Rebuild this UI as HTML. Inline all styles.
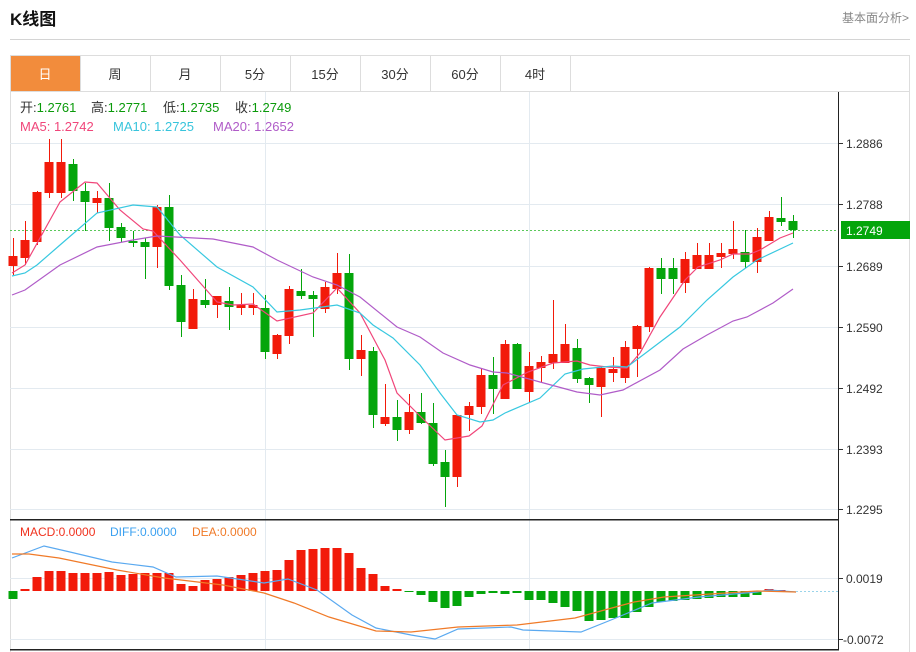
<!DOCTYPE html>
<html><head><meta charset="utf-8"><style>
body{margin:0;width:916px;height:652px;background:#fff;overflow:hidden;font-family:"Liberation Sans","Noto Sans CJK SC",sans-serif;}
</style></head><body>
<svg width="916" height="652" xmlns="http://www.w3.org/2000/svg" style="position:absolute;left:0;top:0;font-family:'Liberation Sans','Noto Sans CJK SC',sans-serif">
<text x="10" y="25" font-size="17" font-weight="bold" fill="#111">K线图</text>
<text x="909" y="22" font-size="12" fill="#888" text-anchor="end">基本面分析&gt;</text>
<rect x="10" y="39" width="900" height="1" fill="#d4d4d4"/>
<rect x="10.5" y="55.5" width="899" height="600" fill="none" stroke="#ddd"/>
<rect x="11" y="56" width="69" height="35" fill="#f28c3c"/>
<rect x="10" y="91" width="900" height="1" fill="#ddd"/>
<g fill="#ddd"><rect x="80" y="56" width="1" height="35"/><rect x="150" y="56" width="1" height="35"/><rect x="220" y="56" width="1" height="35"/><rect x="290" y="56" width="1" height="35"/><rect x="360" y="56" width="1" height="35"/><rect x="430" y="56" width="1" height="35"/><rect x="500" y="56" width="1" height="35"/><rect x="570" y="56" width="1" height="35"/></g>
<g font-size="13" text-anchor="middle" fill="#333"><text x="45" y="79" fill="#fff">日</text><text x="115" y="79">周</text><text x="185" y="79">月</text><text x="255" y="79">5分</text><text x="325" y="79">15分</text><text x="395" y="79">30分</text><text x="465" y="79">60分</text><text x="535" y="79">4时</text></g>
<!-- grid -->
<g fill="#e3eaf0"><rect x="10" y="143" width="829" height="1"/><rect x="10" y="204" width="829" height="1"/><rect x="10" y="266" width="829" height="1"/><rect x="10" y="327" width="829" height="1"/><rect x="10" y="388" width="829" height="1"/><rect x="10" y="449" width="829" height="1"/><rect x="10" y="509" width="829" height="1"/><rect x="265" y="92" width="1" height="558"/><rect x="529" y="92" width="1" height="558"/><rect x="10" y="578" width="829" height="1"/><rect x="10" y="639" width="829" height="1"/></g>
<rect x="838" y="92" width="1" height="558" fill="#222"/>
<rect x="10" y="519" width="829" height="1.5" fill="#222"/>
<rect x="10" y="649" width="829" height="1.5" fill="#222"/>
<g fill="#333"><rect x="839" y="143" width="4" height="1"/><rect x="839" y="204" width="4" height="1"/><rect x="839" y="266" width="4" height="1"/><rect x="839" y="327" width="4" height="1"/><rect x="839" y="388" width="4" height="1"/><rect x="839" y="449" width="4" height="1"/><rect x="839" y="509" width="4" height="1"/><rect x="839" y="578" width="4" height="1"/><rect x="839" y="639" width="4" height="1"/></g>
<g font-size="12" fill="#333"><text x="846" y="148">1.2886</text><text x="846" y="209">1.2788</text><text x="846" y="271">1.2689</text><text x="846" y="332">1.2590</text><text x="846" y="393">1.2492</text><text x="846" y="454">1.2393</text><text x="846" y="514">1.2295</text><text x="846" y="583">0.0019</text><text x="843" y="644">-0.0072</text></g>
<line x1="10" y1="230.5" x2="838" y2="230.5" stroke="#5ac85a" stroke-dasharray="2,2"/>
<rect x="841" y="221" width="69" height="18" fill="#04a50b"/>
<text x="846" y="235" font-size="12" fill="#fff">1.2749</text>
<g font-size="13" fill="#333">
<text x="20" y="112">开:<tspan fill="#0a9a0a">1.2761</tspan></text>
<text x="91" y="112">高:<tspan fill="#0a9a0a">1.2771</tspan></text>
<text x="163" y="112">低:<tspan fill="#0a9a0a">1.2735</tspan></text>
<text x="235" y="112">收:<tspan fill="#0a9a0a">1.2749</tspan></text>
<text x="20" y="131" fill="#f0467a">MA5: 1.2742</text>
<text x="113" y="131" fill="#38c4dc">MA10: 1.2725</text>
<text x="213" y="131" fill="#b05cc8">MA20: 1.2652</text>
</g>
<!-- red candles -->
<g fill="#f21a0a" stroke="#f21a0a">
<path stroke-width="1" fill="none" d="M13.5 238V275M25.5 221V265M37.5 191V245M49.5 139V198M61.5 139V198M97.5 191V213M157.5 205V268M193.5 289V329M217.5 296V318M241.5 293V315M253.5 293V315M277.5 334V359M289.5 286V344M325.5 282V313M337.5 253V294M361.5 335V376M385.5 384V426M409.5 394V434M457.5 415V487M469.5 402V431M481.5 368V414M505.5 340V399M529.5 352V403M541.5 356V383M553.5 300V369M565.5 324V363M601.5 367V417M613.5 357V382M625.5 341V383M637.5 325V377M649.5 267V332M685.5 252V293M697.5 243V269M709.5 243V269M721.5 243V268M733.5 221V259M757.5 228V273M769.5 211V241"/>
<g stroke="none">
<rect x="8.5" y="256" width="9" height="10"/><rect x="20.5" y="240" width="9" height="18"/><rect x="32.5" y="192" width="9" height="50"/><rect x="44.5" y="162" width="9" height="31"/><rect x="56.5" y="162" width="9" height="31"/><rect x="92.5" y="198" width="9" height="5"/><rect x="152.5" y="207" width="9" height="40"/><rect x="188.5" y="299" width="9" height="30"/><rect x="212.5" y="296" width="9" height="9"/><rect x="236.5" y="305" width="9" height="3"/><rect x="248.5" y="305" width="9" height="3"/><rect x="272.5" y="335" width="9" height="19"/><rect x="284.5" y="289" width="9" height="47"/><rect x="320.5" y="287" width="9" height="22"/><rect x="332.5" y="273" width="9" height="16"/><rect x="356.5" y="350" width="9" height="9"/><rect x="380.5" y="417" width="9" height="7"/><rect x="404.5" y="412" width="9" height="18"/><rect x="452.5" y="415" width="9" height="62"/><rect x="464.5" y="406" width="9" height="9"/><rect x="476.5" y="375" width="9" height="32"/><rect x="500.5" y="344" width="9" height="55"/><rect x="524.5" y="366" width="9" height="26"/><rect x="536.5" y="362" width="9" height="6"/><rect x="548.5" y="354" width="9" height="9"/><rect x="560.5" y="344" width="9" height="19"/><rect x="596.5" y="368" width="9" height="19"/><rect x="608.5" y="369" width="9" height="4"/><rect x="620.5" y="347" width="9" height="31"/><rect x="632.5" y="326" width="9" height="23"/><rect x="644.5" y="268" width="9" height="59"/><rect x="680.5" y="259" width="9" height="24"/><rect x="692.5" y="255" width="9" height="14"/><rect x="704.5" y="255" width="9" height="14"/><rect x="716.5" y="253" width="9" height="4"/><rect x="728.5" y="249" width="9" height="5"/><rect x="752.5" y="237" width="9" height="25"/><rect x="764.5" y="217" width="9" height="24"/>
</g></g>
<!-- green candles -->
<g fill="#04a50b" stroke="#04a50b">
<path stroke-width="1" fill="none" d="M73.5 159V201M85.5 183V231M109.5 183V241M121.5 223V242M133.5 231V247M145.5 238V279M169.5 195V290M181.5 275V337M205.5 279V308M229.5 287V330M265.5 295V359M301.5 269V299M313.5 291V337M349.5 254V370M373.5 347V428M397.5 400V441M421.5 393V424M433.5 403V466M445.5 450V507M493.5 357V414M517.5 343V389M577.5 339V383M589.5 377V403M661.5 258V294M673.5 258V294M745.5 230V268M781.5 197V226M793.5 215V238"/>
<g stroke="none">
<rect x="68.5" y="164" width="9" height="27"/><rect x="80.5" y="191" width="9" height="11"/><rect x="104.5" y="198" width="9" height="30"/><rect x="116.5" y="227" width="9" height="11"/><rect x="128.5" y="241" width="9" height="2"/><rect x="140.5" y="242" width="9" height="5"/><rect x="164.5" y="207" width="9" height="79"/><rect x="176.5" y="285" width="9" height="37"/><rect x="200.5" y="300" width="9" height="5"/><rect x="224.5" y="301" width="9" height="6"/><rect x="260.5" y="308" width="9" height="44"/><rect x="296.5" y="291" width="9" height="5"/><rect x="308.5" y="295" width="9" height="4"/><rect x="344.5" y="273" width="9" height="86"/><rect x="368.5" y="351" width="9" height="64"/><rect x="392.5" y="417" width="9" height="13"/><rect x="416.5" y="412" width="9" height="11"/><rect x="428.5" y="423" width="9" height="41"/><rect x="440.5" y="462" width="9" height="15"/><rect x="488.5" y="375" width="9" height="14"/><rect x="512.5" y="344" width="9" height="45"/><rect x="572.5" y="348" width="9" height="31"/><rect x="584.5" y="378" width="9" height="7"/><rect x="656.5" y="268" width="9" height="11"/><rect x="668.5" y="268" width="9" height="11"/><rect x="740.5" y="252" width="9" height="10"/><rect x="776.5" y="218" width="9" height="4"/><rect x="788.5" y="221" width="9" height="9"/>
</g></g>
<!-- MA lines -->
<polyline fill="none" stroke="#f0467a" stroke-width="1.2" points="12,273 25,265 60,202 85,182 97,183 120,210 143,229 153,231 180,260 217,302 233,305 253,304 277,321 313,313 337,288 360,313 385,360 397,393 422,418 445,440 469,436 482,426 503,385 528,372 553,363 577,361 590,365 607,367 627,368 640,353 660,317 685,280 698,267 720,260 733,254 750,254 760,250 780,238 793,233"/>
<polyline fill="none" stroke="#38c8e0" stroke-width="1.2" points="12,276 25,273 37,265 60,245 97,213 133,205 157,207 180,235 217,267 253,287 277,312 300,310 337,305 360,313 373,325 393,338 420,365 440,393 457,415 480,422 493,420 505,413 540,398 565,374 583,369 613,366 627,367 647,352 680,327 707,300 733,277 757,260 793,243"/>
<polyline fill="none" stroke="#b05cc8" stroke-width="1.2" points="12,295 25,290 60,265 97,247 133,240 157,236 213,239 253,247 277,260 313,277 337,285 360,297 397,327 420,337 443,353 470,365 493,372 507,373 540,382 577,392 600,395 623,390 660,370 683,349 707,335 733,321 747,317 773,303 793,289"/>
<!-- MACD -->
<g font-size="12">
<text x="20" y="536" fill="#f0321e">MACD:0.0000</text>
<text x="110" y="536" fill="#3aa0f0">DIFF:0.0000</text>
<text x="192" y="536" fill="#f07a28">DEA:0.0000</text>
</g>
<g fill="#f21a0a">
<rect x="20.5" y="589" width="9" height="2"/><rect x="32.5" y="577" width="9" height="14"/><rect x="44.5" y="571" width="9" height="20"/><rect x="56.5" y="571" width="9" height="20"/><rect x="68.5" y="573" width="9" height="18"/><rect x="80.5" y="573" width="9" height="18"/><rect x="92.5" y="573" width="9" height="18"/><rect x="104.5" y="572" width="9" height="19"/><rect x="116.5" y="575" width="9" height="16"/><rect x="128.5" y="574" width="9" height="17"/><rect x="140.5" y="573" width="9" height="18"/><rect x="152.5" y="573" width="9" height="18"/><rect x="164.5" y="573" width="9" height="18"/><rect x="176.5" y="584" width="9" height="7"/><rect x="188.5" y="586" width="9" height="5"/><rect x="200.5" y="580" width="9" height="11"/><rect x="212.5" y="579" width="9" height="12"/><rect x="224.5" y="577" width="9" height="14"/><rect x="236.5" y="575" width="9" height="16"/><rect x="248.5" y="573" width="9" height="18"/><rect x="260.5" y="571" width="9" height="20"/><rect x="272.5" y="570" width="9" height="21"/><rect x="284.5" y="560" width="9" height="31"/><rect x="296.5" y="550" width="9" height="41"/><rect x="308.5" y="549" width="9" height="42"/><rect x="320.5" y="548" width="9" height="43"/><rect x="332.5" y="548" width="9" height="43"/><rect x="344.5" y="553" width="9" height="38"/><rect x="356.5" y="568" width="9" height="23"/><rect x="368.5" y="574" width="9" height="17"/><rect x="380.5" y="586" width="9" height="5"/><rect x="392.5" y="589" width="9" height="2"/><rect x="764.5" y="589" width="9" height="2"/><rect x="776.5" y="590" width="9" height="1"/>
</g>
<g fill="#04a50b">
<rect x="8.5" y="591" width="9" height="8"/><rect x="404.5" y="591" width="9" height="1"/><rect x="416.5" y="591" width="9" height="4"/><rect x="428.5" y="591" width="9" height="11"/><rect x="440.5" y="591" width="9" height="17"/><rect x="452.5" y="591" width="9" height="15"/><rect x="464.5" y="591" width="9" height="6"/><rect x="476.5" y="591" width="9" height="3"/><rect x="488.5" y="591" width="9" height="2"/><rect x="500.5" y="591" width="9" height="3"/><rect x="512.5" y="591" width="9" height="2"/><rect x="524.5" y="591" width="9" height="9"/><rect x="536.5" y="591" width="9" height="9"/><rect x="548.5" y="591" width="9" height="12"/><rect x="560.5" y="591" width="9" height="16"/><rect x="572.5" y="591" width="9" height="20"/><rect x="584.5" y="591" width="9" height="30"/><rect x="596.5" y="591" width="9" height="29"/><rect x="608.5" y="591" width="9" height="27"/><rect x="620.5" y="591" width="9" height="27"/><rect x="632.5" y="591" width="9" height="21"/><rect x="644.5" y="591" width="9" height="16"/><rect x="656.5" y="591" width="9" height="11"/><rect x="668.5" y="591" width="9" height="10"/><rect x="680.5" y="591" width="9" height="9"/><rect x="692.5" y="591" width="9" height="8"/><rect x="704.5" y="591" width="9" height="7"/><rect x="716.5" y="591" width="9" height="6"/><rect x="728.5" y="591" width="9" height="6"/><rect x="740.5" y="591" width="9" height="6"/><rect x="752.5" y="591" width="9" height="4"/>
</g>
<line x1="796" y1="591.5" x2="838" y2="591.5" stroke="#9ad4ea" stroke-dasharray="2,2"/>
<polyline fill="none" stroke="#5aa9f0" stroke-width="1.2" points="12,558 44,546 70,552 112,562 153,567 176,577 217,576 264,583 288,579 317,590 352,615 376,628 411,635 435,639 458,629 511,627 523,630 581,632 611,620 652,603 699,597 757,592 769,590 796,592"/>
<polyline fill="none" stroke="#f07a28" stroke-width="1.2" points="12,554 29,554 59,558 117,570 164,578 223,585 264,593 294,603 329,617 376,631 411,632 458,627 517,625 575,618 634,602 664,597 757,591 796,592"/>
</svg>
</body></html>
